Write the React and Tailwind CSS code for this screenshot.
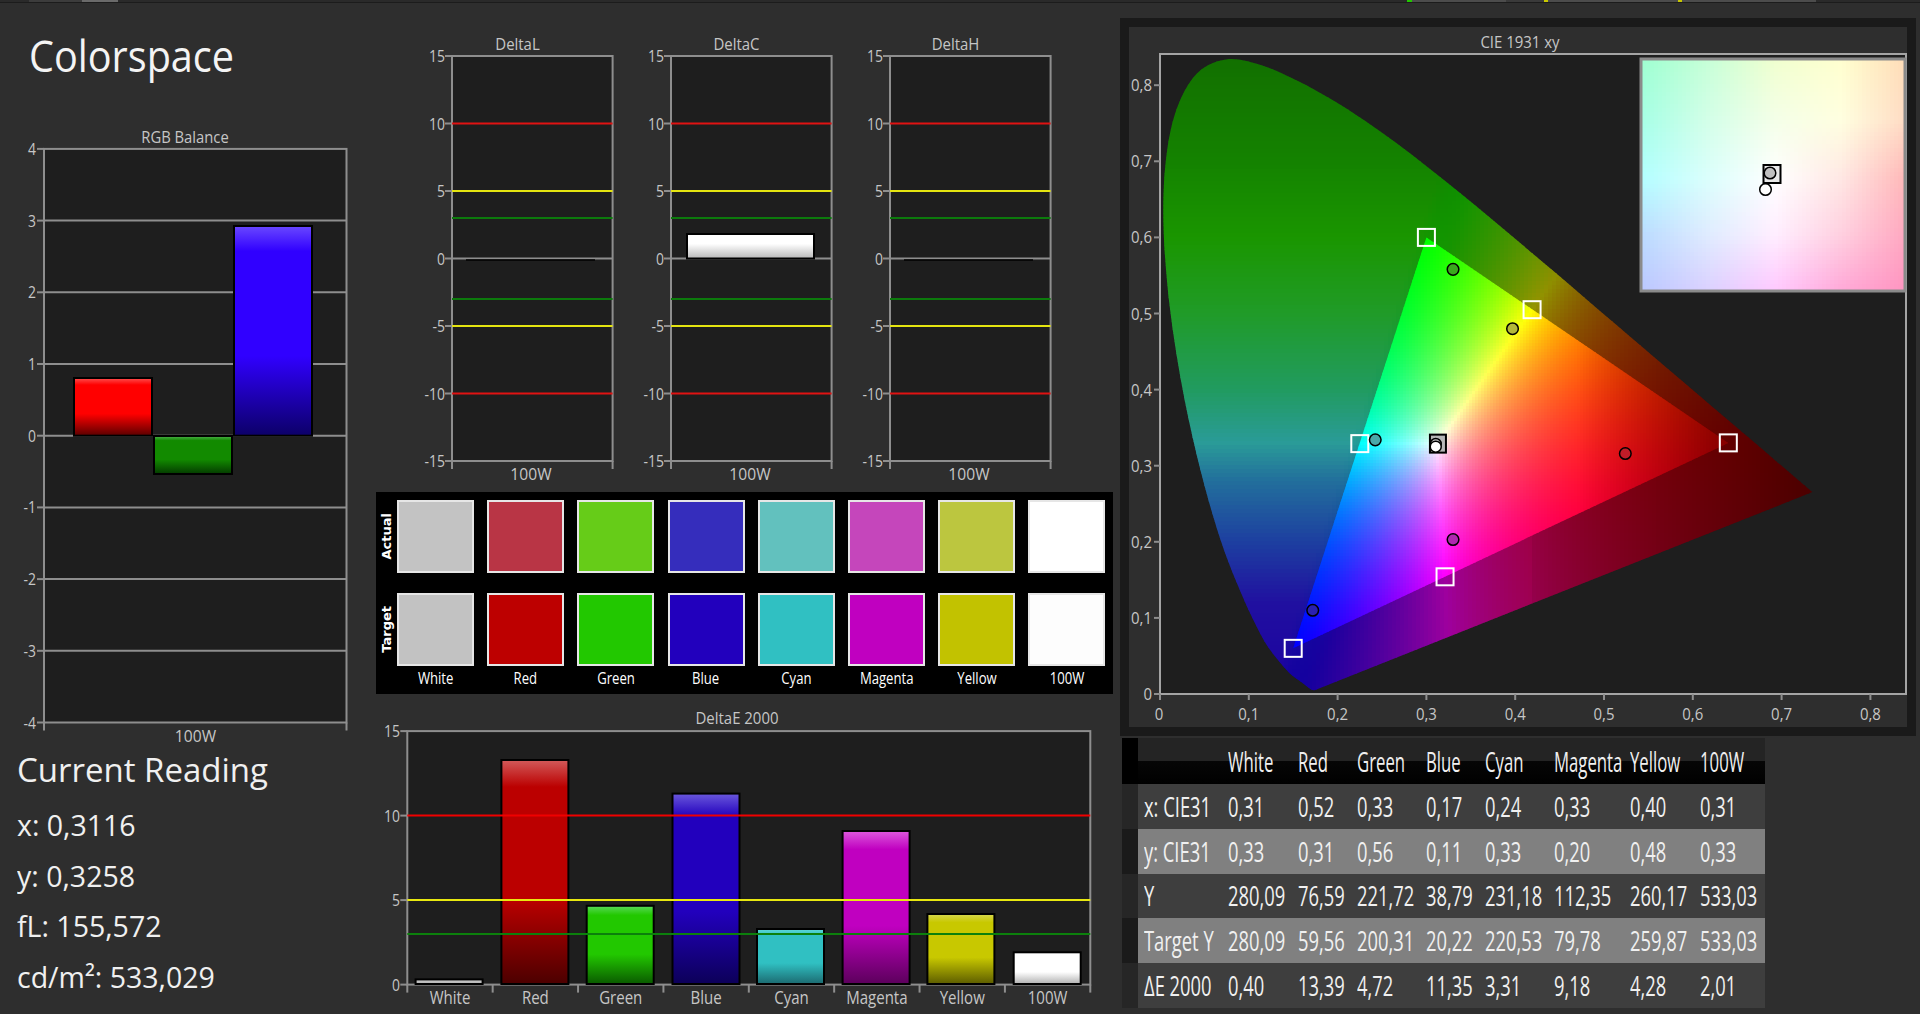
import React from "react";

const ink = "#c6c6c6";
const grid = "#8e8e8e";

const T = ({ x, y, s = 17, sx = 0.82, a = "middle", c = ink, children }) => (
  <text transform={`translate(${x} ${y}) scale(${sx} 1)`} fontSize={s} textAnchor={a} fill={c}>
    {children}
  </text>
);

const barColors = {
  red: ["#ff5050", "#ff0000", "#5a0000"],
  green: ["#50b050", "#128a00", "#043a00"],
  blue: ["#6a48ff", "#3000ff", "#0c0068"],
  eWhite: ["#d8d8d8", "#c0c0c0", "#a0a0a0"],
  eRed: ["#d25a5a", "#bb0000", "#4c0000"],
  eGreen: ["#5ada5a", "#22c800", "#0a5a00"],
  eBlue: ["#6a58dc", "#2200bd", "#0c0058"],
  eCyan: ["#60d8d8", "#30c0c2", "#1c6a70"],
  eMagenta: ["#dc58dc", "#c000c0", "#5c005c"],
  eYellow: ["#d8d850", "#c8c800", "#5c5c00"],
  eFull: ["#ffffff", "#ffffff", "#b0b0b0"],
};

const Grads = () => (
  <defs>
    {Object.keys(barColors).map((k) => (
      <linearGradient key={k} id={"g-" + k} x1="0" y1="0" x2="0" y2="1">
        <stop offset="0" stopColor={barColors[k][0]} />
        <stop offset="0.12" stopColor={barColors[k][1]} />
        <stop offset="0.62" stopColor={barColors[k][1]} />
        <stop offset="1" stopColor={barColors[k][2]} />
      </linearGradient>
    ))}
  </defs>
);

const Bar = ({ x, y, w, h, k }) => (
  <rect x={x} y={y} width={w} height={h} fill={`url(#g-${k})`} stroke="#000" strokeWidth="2" />
);

// ---------- left column chart
const RgbBalance = () => {
  const L = 44;
  const R = 346.5;
  const yOf = (v) => 310.7 - v * 71.7;
  return (
    <svg width="376" height="625" className="block">
      <Grads />
      <T x={185} y={18} s={17} sx={0.87}>RGB Balance</T>
      <rect x={L} y={yOf(4)} width={R - L} height={yOf(-4) - yOf(4)} fill="#1e1e1e" stroke={grid} strokeWidth="2" />
      {[3, 2, 1, 0, -1, -2, -3].map((v) => (
        <line key={v} x1={L} x2={R} y1={yOf(v)} y2={yOf(v)} stroke={grid} strokeWidth="2" />
      ))}
      {[4, 3, 2, 1, 0, -1, -2, -3, -4].map((v) => (
        <g key={v}>
          <line x1={L - 7} x2={L} y1={yOf(v)} y2={yOf(v)} stroke={grid} strokeWidth="2" />
          <T x={36} y={yOf(v) + 6} a="end">{v}</T>
        </g>
      ))}
      <line x1={L} x2={L} y1={yOf(-4)} y2={yOf(-4) + 8} stroke={grid} strokeWidth="2" />
      <line x1={R} x2={R} y1={yOf(-4)} y2={yOf(-4) + 8} stroke={grid} strokeWidth="2" />
      <T x={195.5} y={617} s={17} sx={0.92}>100W</T>
      <Bar x={74} y={253} w={78} h={57.7} k="red" />
      <Bar x={154} y={311} w={78} h={38} k="green" />
      <Bar x={234} y={101} w={78} h={209.7} k="blue" />
    </svg>
  );
};

// ---------- delta charts
const DeltaChart = ({ title, children }) => {
  const L = 32;
  const R = 192.6;
  const yOf = (v) => 238.5 - v * 13.5;
  const lines = [
    [10, "#e01212"],
    [5, "#e4e410"],
    [3, "#0c7a0c"],
    [-3, "#0c7a0c"],
    [-5, "#e4e410"],
    [-10, "#e01212"],
  ];
  return (
    <svg width="219" height="470" className="block">
      <T x={97.5} y={30} s={17} sx={0.88}>{title}</T>
      <rect x={L} y={yOf(15)} width={R - L} height={yOf(-15) - yOf(15)} fill="#1e1e1e" stroke={grid} strokeWidth="2" />
      <line x1={L} x2={R} y1={yOf(0)} y2={yOf(0)} stroke={grid} strokeWidth="2" />
      {lines.map(([v, c]) => (
        <line key={v} x1={L} x2={R} y1={yOf(v)} y2={yOf(v)} stroke={c} strokeWidth="2" />
      ))}
      {[15, 10, 5, 0, -5, -10, -15].map((v) => (
        <g key={v}>
          <line x1={L - 7} x2={L} y1={yOf(v)} y2={yOf(v)} stroke={grid} strokeWidth="2" />
          <T x={25} y={yOf(v) + 6} a="end">{v}</T>
        </g>
      ))}
      <line x1={L} x2={L} y1={yOf(-15)} y2={yOf(-15) + 8} stroke={grid} strokeWidth="2" />
      <line x1={R} x2={R} y1={yOf(-15)} y2={yOf(-15) + 8} stroke={grid} strokeWidth="2" />
      <T x={111} y={460} s={17} sx={0.92}>100W</T>
      {children}
    </svg>
  );
};

// ---------- swatches
const actual = ["#c3c3c3", "#b93545", "#66cc18", "#352dbc", "#62c1be", "#c546bb", "#bcc63f", "#ffffff"];
const target = ["#c2c2c2", "#bd0000", "#22c800", "#2200bd", "#30c0c2", "#c000c0", "#c2c200", "#fdfdfd"];
const names = ["White", "Red", "Green", "Blue", "Cyan", "Magenta", "Yellow", "100W"];

const Swatch = ({ c }) => (
  <div className="h-[73px] border-2 border-[#e6e6e6]" style={{ backgroundColor: c }} />
);

const SideLabel = ({ children }) => (
  <div className="h-[73px] flex items-center justify-center">
    <span className="[writing-mode:vertical-rl] rotate-180 text-[13px] font-bold text-white font-['DejaVu_Sans',sans-serif]">
      {children}
    </span>
  </div>
);

const Swatches = () => (
  <div className="flex w-[737px] h-[202px] bg-black pt-[8px]">
    <div className="w-[21px] flex flex-col gap-y-[20px]">
      <SideLabel>Actual</SideLabel>
      <SideLabel>Target</SideLabel>
    </div>
    <div className="grid grid-cols-[repeat(8,77px)] gap-x-[13.2px] gap-y-[20px] content-start">
      {actual.map((c, i) => (
        <Swatch key={"a" + i} c={c} />
      ))}
      {target.map((c, i) => (
        <Swatch key={"t" + i} c={c} />
      ))}
      {names.map((n) => (
        <div key={n} className="-mt-[20px] h-[24px] flex items-center justify-center text-[16px] text-white">
          <span className="scale-x-[0.82]">{n}</span>
        </div>
      ))}
    </div>
  </div>
);

// ---------- deltaE chart
const DeltaE = () => {
  const L = 31.3;
  const R = 714.3;
  const yOf = (v) => 274.6 - v * 16.9;
  const step = (R - L) / 8;
  const bars = [
    [39.6, 269.4, "eWhite"],
    [125.4, 50, "eRed"],
    [210.7, 195.8, "eGreen"],
    [296.5, 83.6, "eBlue"],
    [381, 219, "eCyan"],
    [466.6, 121, "eMagenta"],
    [551.4, 204, "eYellow"],
    [637.7, 242.3, "eFull"],
  ];
  return (
    <svg width="736" height="304" className="block">
      <Grads />
      <T x={361} y={14} s={17} sx={0.88}>DeltaE 2000</T>
      <rect x={L} y={yOf(15)} width={R - L} height={yOf(0) - yOf(15)} fill="#1e1e1e" stroke={grid} strokeWidth="2" />
      {[15, 10, 5, 0].map((v) => (
        <g key={v}>
          <line x1={L - 7} x2={L} y1={yOf(v)} y2={yOf(v)} stroke={grid} strokeWidth="2" />
          <T x={24} y={yOf(v) + 6} a="end">{v}</T>
        </g>
      ))}
      {names.map((n, i) => (
        <g key={n}>
          <line x1={L + i * step} x2={L + i * step} y1={yOf(0)} y2={yOf(0) + 8} stroke={grid} strokeWidth="2" />
          <T x={L + (i + 0.5) * step} y={294} s={17.5} sx={0.86}>{n}</T>
        </g>
      ))}
      <line x1={R} x2={R} y1={yOf(0)} y2={yOf(0) + 8} stroke={grid} strokeWidth="2" />
      {bars.map(([x, y, k]) => (
        <Bar key={k} x={x} y={y} w={67} h={274 - y} k={k} />
      ))}
      <line x1={L} x2={R} y1={yOf(10)} y2={yOf(10)} stroke="#f00000" strokeWidth="2" />
      <line x1={L} x2={R} y1={yOf(5)} y2={yOf(5)} stroke="#e8e810" strokeWidth="2" />
      <line x1={L} x2={R} y1={yOf(3)} y2={yOf(3)} stroke="#0c800c" strokeWidth="2" />
    </svg>
  );
};

// ---------- CIE diagram
const locus = [
  [0.1741, 0.005], [0.1714, 0.0051], [0.1689, 0.0069], [0.1644, 0.0109], [0.1566, 0.0177], [0.144, 0.0297],
  [0.1241, 0.0578], [0.1096, 0.0868], [0.0913, 0.1327], [0.0687, 0.2007], [0.0454, 0.295], [0.0235, 0.4127],
  [0.0082, 0.5384], [0.0039, 0.6548], [0.0139, 0.7502], [0.0389, 0.812], [0.0743, 0.8338], [0.1142, 0.8262],
  [0.1547, 0.8059], [0.1929, 0.7816], [0.2296, 0.7543], [0.2658, 0.7243], [0.3016, 0.6923], [0.3373, 0.6589],
  [0.3731, 0.6245], [0.4087, 0.5896], [0.4441, 0.5547], [0.4788, 0.5202], [0.5125, 0.4866], [0.5448, 0.4544],
  [0.5752, 0.4242], [0.6029, 0.3965], [0.627, 0.3725], [0.6482, 0.3514], [0.6658, 0.334], [0.6915, 0.3083],
  [0.7079, 0.292], [0.719, 0.2809], [0.726, 0.274], [0.7347, 0.2653],
];

const px = (x) => 31 + x * 888;
const py = (y) => 667 - y * 761;
const pts = (arr) => arr.map(([x, y]) => `${px(x).toFixed(1)},${py(y).toFixed(1)}`).join(" ");
const triangle = [[0.64, 0.33], [0.3, 0.6], [0.15, 0.06]];

// smooth curve through the spectral locus, closed by the straight purple line
const locusPath = () => {
  const p = locus.map(([x, y]) => [px(x), py(y)]);
  let d = `M${p[0][0]} ${p[0][1]}`;
  for (let i = 0; i < p.length - 1; i++) {
    const a = p[Math.max(0, i - 1)];
    const b = p[i];
    const c = p[i + 1];
    const e = p[Math.min(p.length - 1, i + 2)];
    d += ` C${b[0] + (c[0] - a[0]) / 6} ${b[1] + (c[1] - a[1]) / 6} ${c[0] - (e[0] - b[0]) / 6} ${c[1] - (e[1] - b[1]) / 6} ${c[0]} ${c[1]}`;
  }
  return d + "Z";
};

const lerp = (a, b, t) => a + (b - a) * Math.min(1, Math.max(0, t));

const linearRgb = (x, y0) => {
  const y = Math.max(y0, 0.004);
  const X = x / y;
  const Z = (1 - x - y) / y;
  const r = Math.max(0, 3.2406 * X - 1.5372 - 0.4986 * Z);
  const g = Math.max(0, -0.9689 * X + 1.8758 + 0.0415 * Z);
  const b = Math.max(0, 0.0557 * X - 0.204 + 1.057 * Z);
  const m = Math.max(r, g, b) || 1;
  return [r / m, g / m, b / m];
};

const rgb = (r, g, b) => `rgb(${Math.round(r * 255)},${Math.round(g * 255)},${Math.round(b * 255)})`;

const innerColor = (x, y) => {
  const [r, g, b] = linearRgb(x, y);
  const dim = lerp(1, 0.52, (x - 0.47) / 0.17);
  const p = 1.1;
  return rgb(r ** p * dim, g ** p * dim, b ** p * dim);
};

// left part of the horseshoe runs in horizontal bands
const bands = [
  [0.85, [18, 110, 0]],
  [0.7, [20, 130, 0]],
  [0.6, [26, 150, 0]],
  [0.5, [32, 155, 40]],
  [0.4, [33, 155, 96]],
  [0.33, [42, 155, 152]],
  [0.28, [34, 111, 156]],
  [0.2, [29, 63, 160]],
  [0.12, [32, 16, 160]],
  [0, [28, 0, 160]],
];

const bandColor = (y) => {
  for (let i = 0; i < bands.length - 1; i++) {
    const [y1, c1] = bands[i];
    const [y2, c2] = bands[i + 1];
    if (y <= y1 && y >= y2) {
      const t = (y1 - y) / (y1 - y2);
      return c1.map((v, k) => v + (c2[k] - v) * t);
    }
  }
  return y > 0.85 ? bands[0][1] : bands[bands.length - 1][1];
};

const outerColor = (x, y) => {
  const [r, g, b] = linearRgb(x, y);
  let f = lerp(0.58, 0.3, (x - 0.42) / 0.31);
  if (y < 0.22 && x < 0.42) f = 0.62;
  const p = 1;
  const right = [r ** p * f * 255, g ** p * f * 255, b ** p * f * 255];
  const edge = 0.15 + (y - 0.06) * (0.15 / 0.54);
  const t = Math.min(1, Math.max(0, (x - edge + 0.01) / 0.05));
  const left = bandColor(y);
  const c = left.map((v, k) => Math.round(v + (right[k] - v) * t));
  return `rgb(${c.join(",")})`;
};

const cells = (fn, x0, x1, y0, y1, size) => {
  const out = [];
  for (let py0 = y0; py0 < y1; py0 += size) {
    for (let px0 = x0; px0 < x1; px0 += size) {
      const x = (px0 + size / 2 - 31) / 888;
      const y = (667 - py0 - size / 2) / 761;
      out.push(<rect key={px0 + "-" + py0} x={px0} y={py0} width={size + 0.5} height={size + 0.5} fill={fn(x, y)} />);
    }
  }
  return out;
};

const insetStops = [
  ["#a0ffd2", "#c8ffd8", "#f0ffd0", "#ffffd0", "#ffdcb8"],
  ["#a8ffe6", "#d4ffe8", "#f4ffe8", "#ffffe0", "#ffdcc4"],
  ["#b4ffff", "#dcfffc", "#ffffff", "#ffe8e4", "#ffb8b8"],
  ["#bcdcff", "#e0ecff", "#ffeeff", "#ffd0e0", "#ffa8c0"],
  ["#bcc8ff", "#dcd0ff", "#ffc8ff", "#ffa8d8", "#ff94c0"],
];

const mix = (a, b, t) => {
  const pa = [1, 3, 5].map((i) => parseInt(a.slice(i, i + 2), 16));
  const pb = [1, 3, 5].map((i) => parseInt(b.slice(i, i + 2), 16));
  return pa.map((v, i) => v + (pb[i] - v) * t);
};

const insetCells = () => {
  const out = [];
  const W = 262;
  const H = 230;
  const size = 4;
  for (let j = 0; j < H; j += size) {
    for (let i = 0; i < W; i += size) {
      const u = (i / W) * 4;
      const v = (j / H) * 4;
      const iu = Math.min(3, Math.floor(u));
      const iv = Math.min(3, Math.floor(v));
      const top = mix(insetStops[iv][iu], insetStops[iv][iu + 1], u - iu);
      const bot = mix(insetStops[iv + 1][iu], insetStops[iv + 1][iu + 1], u - iu);
      const c = top.map((t, k) => Math.round(t + (bot[k] - t) * (v - iv)));
      const w = Math.min(size + 0.5, W - i);
      const h = Math.min(size + 0.5, H - j);
      out.push(<rect key={i + "-" + j} x={513 + i} y={33 + j} width={w} height={h} fill={`rgb(${c.join(",")})`} />);
    }
  }
  return out;
};

const squares = [[0.3, 0.6], [0.419, 0.505], [0.225, 0.329], [0.64, 0.33], [0.321, 0.154], [0.15, 0.06]];
const dots = [
  [0.33, 0.558, "#3aa81c"],
  [0.397, 0.48, "#b4b83a"],
  [0.2424, 0.334, "#4aa8a8"],
  [0.524, 0.316, "#c01c28"],
  [0.33, 0.203, "#b028b0"],
  [0.172, 0.11, "#2a20b0"],
];

const Cie = () => {
  const horseshoe = React.useMemo(() => cells(outerColor, 31, 700, 30, 668, 4), []);
  const inner = React.useMemo(() => cells(innerColor, 160, 600, 205, 630, 3), []);
  const inset = React.useMemo(() => insetCells(), []);
  const ticks = [0, 1, 2, 3, 4, 5, 6, 7, 8];
  return (
    <svg width="778" height="700" className="block">
      <defs>
        <clipPath id="shoe"><path d={locusPath()} /></clipPath>
        <clipPath id="tri"><polygon points={pts(triangle)} /></clipPath>
      </defs>
      <T x={391} y={21} s={17} sx={0.88}>CIE 1931 xy</T>
      <rect x={31} y={27} width={746} height={640} fill="#1e1e1e" stroke="#a4a4a4" strokeWidth="2" />
      {ticks.map((t) => (
        <g key={t}>
          <line x1={px(t / 10)} x2={px(t / 10)} y1={667} y2={673} stroke={grid} strokeWidth="2" />
          <line x1={25} x2={31} y1={py(t / 10)} y2={py(t / 10)} stroke={grid} strokeWidth="2" />
          <T x={px(t / 10) - (t === 0 ? 1 : 0)} y={693} s={17} sx={0.88}>{t === 0 ? "0" : "0," + t}</T>
          <T x={23} y={py(t / 10) + 6} s={17} sx={0.88} a="end">{t === 0 ? "0" : "0," + t}</T>
        </g>
      ))}
      <g clipPath="url(#shoe)">{horseshoe}</g>
      <g clipPath="url(#tri)">{inner}</g>
      {squares.map(([x, y]) => (
        <rect key={x} x={px(x) - 8.5} y={py(y) - 8.5} width="17" height="17" fill="none" stroke="#fff" strokeWidth="2" />
      ))}
      <rect x={px(0.313) - 8} y={py(0.329) - 9} width="16" height="18" fill="#b8b8b8" stroke="#000" strokeWidth="2" />
      <circle cx={px(0.3105)} cy={py(0.3285)} r="5.5" fill="#c0c0c0" stroke="#000" strokeWidth="1.5" />
      <circle cx={px(0.3105)} cy={py(0.325)} r="5.5" fill="#fff" stroke="#000" strokeWidth="1.5" />
      {dots.map(([x, y, c]) => (
        <circle key={x} cx={px(x)} cy={py(y)} r="5.8" fill={c} stroke="#000" strokeWidth="1.5" />
      ))}
      {inset}
      <rect x={512} y={32} width={264} height={232} fill="none" stroke="#8a8a8a" strokeWidth="3" />
      <rect x={634.5} y={138} width="17" height="18" fill="#e8e8e8" stroke="#000" strokeWidth="2" />
      <circle cx={641} cy={146} r="5.8" fill="#c0c0c0" stroke="#000" strokeWidth="1.5" />
      <circle cx={636.5} cy={162.5} r="5.8" fill="#fff" stroke="#000" strokeWidth="1.5" />
    </svg>
  );
};

// ---------- table
const rows = [
  ["x: CIE31", "0,31", "0,52", "0,33", "0,17", "0,24", "0,33", "0,40", "0,31"],
  ["y: CIE31", "0,33", "0,31", "0,56", "0,11", "0,33", "0,20", "0,48", "0,33"],
  ["Y", "280,09", "76,59", "221,72", "38,79", "231,18", "112,35", "260,17", "533,03"],
  ["Target Y", "280,09", "59,56", "200,31", "20,22", "220,53", "79,78", "259,87", "533,03"],
  ["ΔE 2000", "0,40", "13,39", "4,72", "11,35", "3,31", "9,18", "4,28", "2,01"],
];

const cols = "grid grid-cols-[89.9px_69.7px_59px_69.6px_58.9px_69.2px_76px_69.7px_64px]";

const Cell = ({ children, first }) => (
  <div className={first ? "pl-[6px] flex items-center" : "flex items-center"}>
    <span className="block origin-left scale-x-[0.68] whitespace-nowrap text-[27px] leading-none text-[#f0f0f0]">{children}</span>
  </div>
);

const HeadCell = ({ children }) => (
  <div className="flex items-center">
    <span className="block origin-left scale-x-[0.62] whitespace-nowrap text-[27px] leading-none text-[#f0f0f0]">{children}</span>
  </div>
);

const DataTable = () => (
  <div className="flex flex-col w-[643px]">
    <div className="flex h-[46px]">
      <div className="w-[16px] bg-black" />
      <div className={cols + " flex-1 bg-[linear-gradient(#242424_50%,#060606_50%,#000000)]"}>
        <div />
        {names.map((n) => (
          <HeadCell key={n}>{n}</HeadCell>
        ))}
      </div>
    </div>
    {rows.map((r, i) => (
      <div key={r[0]} className="flex h-[44.8px]">
        <div className={i % 2 === 0 ? "w-[16px] bg-[#262626]" : "w-[16px] bg-[#1a1a1a]"} />
        <div className={cols + " flex-1 " + (i % 2 === 0 ? "bg-[#3e3e3e]" : "bg-[#808080]")}>
          {r.map((v, j) => (
            <Cell key={j} first={j === 0}>{v}</Cell>
          ))}
        </div>
      </div>
    ))}
  </div>
);

const TopStrip = () => (
  <div className="h-[3px] shrink-0 flex bg-[#2a2a2a] border-b border-[#1c1c1c]">
    <div className="ml-[29px] w-[53px] bg-[#3c3c3c]" />
    <div className="w-[36px] bg-[#6a6a6a]" />
    <div className="ml-[1289px] w-[5px] bg-[#22c800]" />
    <div className="w-[94px] bg-[#4c4c4c]" />
    <div className="w-[38px] bg-[#3a3a3a]" />
    <div className="w-[4px] bg-[#c8c800]" />
    <div className="w-[130px] bg-[#4c4c4c]" />
    <div className="w-[4px] bg-[#c8c800]" />
    <div className="w-[134px] bg-[#4c4c4c]" />
  </div>
);

const App = () => {
  return (
    <div className="w-[1920px] h-[1014px] overflow-hidden flex flex-col bg-[#2e2e2e] font-['Open_Sans',sans-serif]">
      <TopStrip />
      <div className="flex flex-1">
        {/* left */}
        <div className="w-[376px] shrink-0 flex flex-col">
          <div className="h-[122px] pl-[29px] pt-[24px]">
            <h1 className="origin-left scale-x-[0.9] whitespace-nowrap text-[44px] leading-[56px] text-[#f4f4f4]">Colorspace</h1>
          </div>
          <RgbBalance />
          <div className="pl-[17px] flex flex-col text-[#f0f0f0]">
            <div className="text-[33px] leading-[50px] -mt-[5px]">Current Reading</div>
            <div className="origin-left scale-x-[0.95] text-[30px] leading-[50.5px] mt-[5px]">x: 0,3116</div>
            <div className="origin-left scale-x-[0.95] text-[30px] leading-[50.5px]">y: 0,3258</div>
            <div className="origin-left scale-x-[0.95] text-[30px] leading-[50.5px]">fL: 155,572</div>
            <div className="origin-left scale-x-[0.95] text-[30px] leading-[50.5px]">cd/m²: 533,029</div>
          </div>
        </div>
        {/* middle */}
        <div className="w-[744px] shrink-0 flex flex-col">
          <div className="flex pl-[44px] pt-[17px] h-[488.5px]">
            <DeltaChart title="DeltaL">
              <line x1={46} x2={175} y1={240} y2={240} stroke="#000" strokeWidth="1.5" />
            </DeltaChart>
            <DeltaChart title="DeltaC">
              <defs>
                <linearGradient id="deltac" x1="0" y1="0" x2="0" y2="1">
                  <stop offset="0.4" stopColor="#ffffff" />
                  <stop offset="1" stopColor="#b8b8b8" />
                </linearGradient>
              </defs>
              <rect x={48} y={214} width={127} height={24.5} fill="url(#deltac)" stroke="#000" strokeWidth="2" />
            </DeltaChart>
            <DeltaChart title="DeltaH">
              <line x1={46} x2={175} y1={240} y2={240} stroke="#000" strokeWidth="1.5" />
            </DeltaChart>
          </div>
          <Swatches />
          <div className="mt-[16.5px]">
            <DeltaE />
          </div>
        </div>
        {/* right */}
        <div className="flex-1 flex flex-col pt-[15px]">
          <div className="w-[796px] h-[718px] p-[9px] bg-[#1a1a1a]">
            <div className="bg-[#2e2e2e] h-[700px]">
              <Cie />
            </div>
          </div>
          <div className="ml-[2px] mt-[2px]">
            <DataTable />
          </div>
        </div>
      </div>
    </div>
  );
};

export default App;
